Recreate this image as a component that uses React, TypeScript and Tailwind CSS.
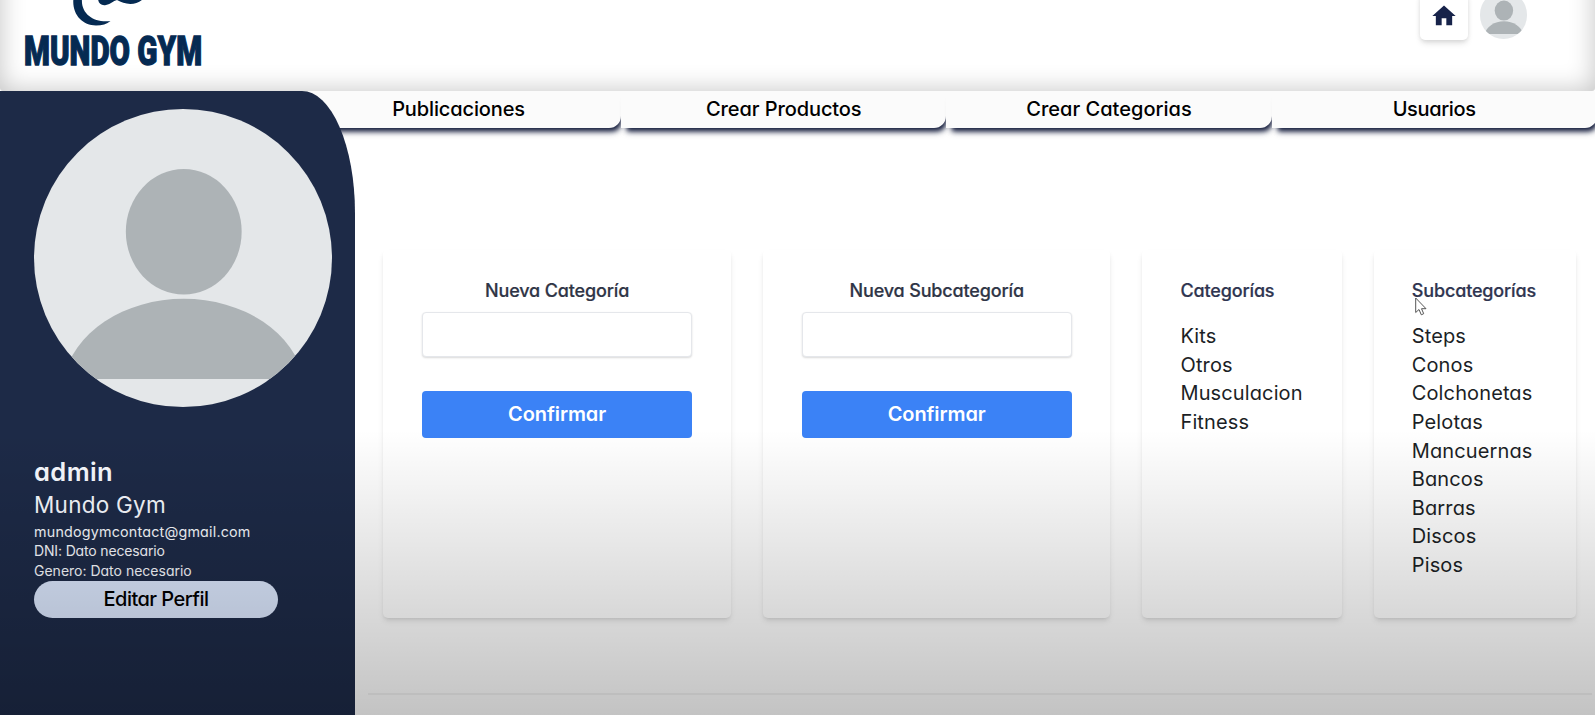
import type { ReactNode } from 'react';
import { MdHome } from 'react-icons/md';

function Avatar({ className }: { className: string }) {
  return (
    <svg viewBox="0 0 298 298" className={`block shrink-0 rounded-full bg-[#e4e7e9] ${className}`}>
      <ellipse cx="150" cy="123" rx="58" ry="62.8" fill="#adb3b6" />
      <path d="M29.5 270A122 95.3 0 0 1 270.5 270Z" transform="translate(0 .5)" fill="#adb3b6" />
    </svg>
  );
}

function NavItem({ children, className }: { children: ReactNode; className: string }) {
  return (
    <a
      className={`flex h-[37px] w-[325.2px] shrink-0 items-center justify-center rounded-br-[12px] bg-[#fbfbfb] pb-px text-[20px] font-medium text-black shadow-[3px_6px_5px_-3px_#141c3c,3px_7px_7px_-3px_#1e274566] ${className}`}
    >
      {children}
    </a>
  );
}

const cardStyle =
  'h-[367.5px] rounded-[5px] shadow-[0_4px_6px_-1px_rgba(0,0,0,0.1),0_2px_4px_-2px_rgba(0,0,0,0.12)] pt-[30px]';

function FormCard({ title }: { title: string }) {
  return (
    <section className={`w-[347.6px] px-[38.7px] ${cardStyle}`}>
      <h2 className="text-center text-[18px] leading-[21px] font-medium tracking-[-0.15px] text-[#2f3546] [-webkit-text-stroke:0.2px_#2f3546]">
        {title}
      </h2>
      <input className="mt-[11px] block h-[45px] w-full rounded-[4px] border border-[#e5e7eb] bg-white shadow-[0_1px_2px_rgba(0,0,0,0.15)] outline-none" />
      <button className="mt-[33.5px] block h-[47.5px] w-full rounded-[4px] bg-[#3b82f6] text-[20px] font-semibold tracking-[-0.1px] text-white">
        Confirmar
      </button>
    </section>
  );
}

function ListCard({ title, items, className }: { title: string; items: string[]; className: string }) {
  return (
    <section className={`pl-[38px] ${className} ${cardStyle}`}>
      <h2 className="text-[18px] leading-[21px] font-medium tracking-[-0.15px] text-[#2f3550] [-webkit-text-stroke:0.2px_#2f3550]">
        {title}
      </h2>
      <ul className="mt-[21.2px] text-[20px] leading-[28.6px] tracking-[0.12px] text-[#1c1f26]">
        {items.map((item) => (
          <li key={item}>{item}</li>
        ))}
      </ul>
    </section>
  );
}

export default function App() {
  return (
    <div className="relative flex h-[715px] w-full flex-col overflow-hidden bg-white font-['Inter',sans-serif] [font-feature-settings:'cv11']">
      <header className="-mt-[40px] flex h-[131px] shrink-0 justify-between rounded-b-[3px] bg-white pr-[68px] pl-[24px] shadow-[inset_0_0_26px_rgba(0,0,0,0.24)]">
        <div className="flex w-[200px] flex-col pt-[40px] text-[#052a52]">
          <svg viewBox="0 0 130 26" className="ml-[46px] h-[26px] w-[130px] shrink-0 overflow-visible" fill="currentColor">
            <path d="M3.500 -2C1.500 14 12 25.500 26 25.500C32 25.500 37 24 40.500 21C24 23 10.500 14 12 -2Z" />
            <path d="M28 -2C28 3 31 6 36 5C41 4 43 1 47 0C55 5 67 6 74 -2Z" />
          </svg>
          <span className="mt-[5px] origin-left scale-x-[0.722] text-[41px] leading-[40px] font-black whitespace-nowrap [font-family:Roboto,sans-serif] [-webkit-text-stroke:1.3px_#052a52]">
            MUNDO GYM
          </span>
        </div>
        <div className="flex items-end gap-[12px] pb-[51px]">
          <button className="flex h-[48px] w-[48px] items-center justify-center rounded-[5px] bg-white pb-[1px] text-[#17234a] shadow-[0_4px_6px_-1px_rgba(0,0,0,0.12),0_1px_4px_rgba(0,0,0,0.08)]">
            <MdHome className="size-[28px]" />
          </button>
          <Avatar className="mb-[1.500px] size-[47.500px]" />
        </div>
      </header>

      <div className="flex grow">
        <aside className="z-10 flex w-[355px] shrink-0 flex-col items-start rounded-tr-[53px_122px] bg-[#1d2a47] pt-[18px] pl-[34px] text-[#f8faff]">
          <Avatar className="size-[297.5px]" />
          <h1 className="mt-[49.5px] text-[25.5px] leading-[32px] font-semibold tracking-[0.4px]">admin</h1>
          <p className="text-[22.5px] leading-[34.500px] tracking-[0.25px]">Mundo Gym</p>
          <p className="-mt-px text-[14.3px] leading-[19px] tracking-[0.2px]">mundogymcontact@gmail.com</p>
          <p className="text-[14px] leading-[19px] tracking-[-0.15px]">DNI: Dato necesario</p>
          <p className="text-[14px] leading-[21px]">Genero: Dato necesario</p>
          <button className="h-[37px] w-[244px] rounded-full bg-[#dbe7fd] text-[20px] font-medium tracking-[-0.52px] text-black">
            Editar Perfil
          </button>
        </aside>

        <main className="flex min-w-0 grow flex-col">
          <nav className="-ml-[59px] flex">
            <NavItem className="tracking-[-0.12px]">Publicaciones</NavItem>
            <NavItem className="tracking-[-0.09px]">Crear Productos</NavItem>
            <NavItem className="tracking-[0.02px]">Crear Categorias</NavItem>
            <NavItem className="tracking-[-0.36px]">Usuarios</NavItem>
          </nav>
          <div className="mt-[122px] flex gap-8 pl-[28.3px]">
            <FormCard title="Nueva Categoría" />
            <FormCard title="Nueva Subcategoría" />
            <ListCard className="w-[199.3px]" title="Categorías" items={['Kits', 'Otros', 'Musculacion', 'Fitness']} />
            <ListCard
              className="w-[202px]"
              title="Subcategorías"
              items={['Steps', 'Conos', 'Colchonetas', 'Pelotas', 'Mancuernas', 'Bancos', 'Barras', 'Discos', 'Pisos']}
            />
          </div>
          <hr className="mt-[75.5px] mr-[3px] ml-[13px] border-t-2 border-[#f3f3f3]" />
        </main>
      </div>

      <div className="pointer-events-none absolute inset-x-0 bottom-0 z-20 h-[285px] bg-linear-to-b from-black/0 to-black/[0.235]" />
      <svg viewBox="0 0 12 19" className="pointer-events-none absolute top-[297px] left-[1415px] z-30 h-[19px] w-[12px]">
        <path d="M.7 1V15.500L4 12.500L6.300 17.800L8.700 16.700L6.500 11.700H11Z" fill="#fff" stroke="#555" />
      </svg>
    </div>
  );
}
